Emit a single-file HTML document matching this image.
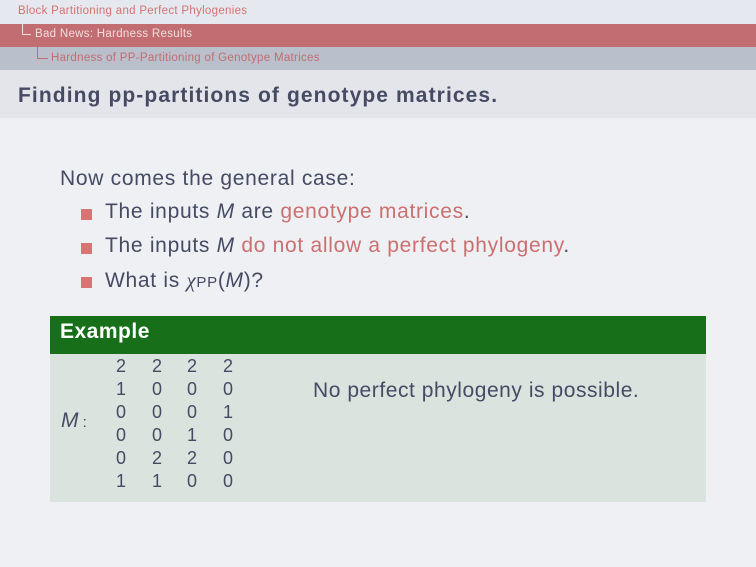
<!DOCTYPE html>
<html><head><meta charset="utf-8"><style>
body{margin:0;width:756px;height:567px;background:#eef0f4;font-family:"Liberation Sans",sans-serif;position:relative;overflow:hidden;color:#464a63}
.a{position:absolute;white-space:nowrap}
.r{color:#cc6f6f}
.sq{position:absolute;width:11px;height:11px;background:#d97474}
.n{position:absolute;font-size:18px;width:20px;text-align:center}
.b{font-size:21px;letter-spacing:0.7px}
.s{font-size:11.5px;letter-spacing:0.3px}
</style></head><body>
<div class="a" style="left:0;top:0;width:756px;height:24px;background:#e6e8ef"></div>
<div class="a s" style="left:18px;top:5px;color:#d27272">Block Partitioning and Perfect Phylogenies</div>
<div class="a" style="left:0;top:24px;width:756px;height:23px;background:#c26d71"></div>
<div class="a" style="left:22px;top:24px;width:8px;height:10px;border-left:1px solid #f0e0e0;border-bottom:1px solid #f0e0e0"></div>
<div class="a s" style="left:35px;top:28px;color:#f2dede">Bad News: Hardness Results</div>
<div class="a" style="left:0;top:47px;width:756px;height:23px;background:#b9bfcb"></div>
<div class="a" style="left:37px;top:47px;width:10px;height:11px;border-left:1px solid #c26d71;border-bottom:1px solid #c26d71"></div>
<div class="a s" style="left:51px;top:52px;color:#c26d71">Hardness of PP-Partitioning of Genotype Matrices</div>
<div class="a" style="left:0;top:70px;width:756px;height:48px;background:#e4e5ea"></div>
<div class="a" style="left:18px;top:84px;font-size:21px;letter-spacing:1.1px;font-weight:bold;color:#464a63">Finding pp-partitions of genotype matrices.</div>
<div class="a b" style="left:60px;top:167px">Now comes the general case:</div>
<div class="sq" style="left:81px;top:209px"></div>
<div class="a b" style="left:105px;top:200px">The inputs <i>M</i> are <span class="r">genotype matrices</span>.</div>
<div class="sq" style="left:81px;top:243px"></div>
<div class="a b" style="left:105px;top:234px">The inputs <i>M</i> <span class="r">do not allow a perfect phylogeny</span>.</div>
<div class="sq" style="left:81px;top:277px"></div>
<div class="a b" style="left:105px;top:268px">What is <span style="font-family:'Liberation Serif',serif;font-style:italic">χ</span><span style="font-size:15px">PP</span>(<i>M</i>)?</div>
<div class="a" style="left:50px;top:316px;width:656px;height:38px;background:#177019"></div>
<div class="a" style="left:60px;top:320px;font-size:21px;letter-spacing:0.5px;font-weight:bold;color:#fff">Example</div>
<div class="a" style="left:50px;top:354px;width:656px;height:148px;background:#dae3de"></div>
<div class="a" style="left:61px;top:409px;font-size:21px"><i>M</i><span style="font-size:15px"> :</span></div>
<div class="a" style="left:313px;top:379px;font-size:21px;letter-spacing:0.55px">No perfect phylogeny is possible.</div>
<div id="m"></div>
<script>
var d=[[2,2,2,2],[1,0,0,0],[0,0,0,1],[0,0,1,0],[0,2,2,0],[1,1,0,0]],xs=[121,157,192,228],h='';
for(var i=0;i<6;i++)for(var j=0;j<4;j++)h+='<div class="n" style="left:'+(xs[j]-10)+'px;top:'+(356+i*23)+'px">'+d[i][j]+'</div>';
document.getElementById('m').innerHTML=h;
</script>
</body></html>
